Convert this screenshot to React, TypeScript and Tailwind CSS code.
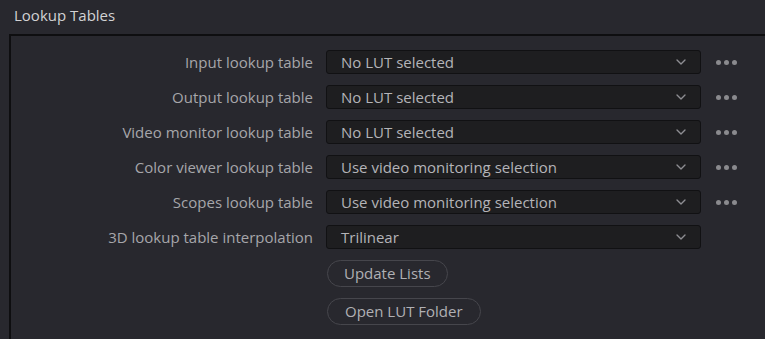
import { ChevronDown } from 'lucide-react';

const rows = [
  { label: 'Input lookup table', value: 'No LUT selected', more: true },
  { label: 'Output lookup table', value: 'No LUT selected', more: true },
  { label: 'Video monitor lookup table', value: 'No LUT selected', more: true },
  { label: 'Color viewer lookup table', value: 'Use video monitoring selection', more: true },
  { label: 'Scopes lookup table', value: 'Use video monitoring selection', more: true },
  { label: '3D lookup table interpolation', value: 'Trilinear', more: false },
];

function Dots() {
  return (
    <div className="flex items-center gap-[3px] w-[22px] ml-[15px]">
      <span className="w-[5px] h-[5px] rounded-full bg-[#8a8a8e]" />
      <span className="w-[5px] h-[5px] rounded-full bg-[#8a8a8e]" />
      <span className="w-[5px] h-[5px] rounded-full bg-[#8a8a8e]" />
    </div>
  );
}

export default function App() {
  return (
    <div
      className="w-[765px] h-[339px] overflow-hidden bg-[#28282e] text-[15px]"
      style={{ fontFamily: '"Open Sans", "Noto Sans", sans-serif' }}
    >
      <div className="h-[34px] pl-[14px] pt-[4px] text-[#d2d2d4]">Lookup Tables</div>
      <div className="ml-[9px] h-[305px] border-l-2 border-t-2 border-[#0e0e10] bg-[#28282e] pt-[14px]">
        <div className="flex flex-col gap-[11px]">
          {rows.map((r) => (
            <div key={r.label} className="flex items-center h-[24px]">
              <div className="w-[302px] text-right whitespace-nowrap text-[#a6a6aa]">{r.label}</div>
              <div className="ml-[13px] w-[375px] h-[24px] flex items-center justify-between rounded-[3px] border border-[#111113] bg-[#1e1e20] pl-[14px] pr-[11px] text-[#b4b4b8]">
                <span>{r.value}</span>
                <ChevronDown size={16} strokeWidth={2} className="text-[#8e8e92]" />
              </div>
              {r.more && <Dots />}
            </div>
          ))}
        </div>
        <div className="ml-[316px] mt-[11px] flex flex-col items-start gap-[11px]">
          <button className="h-[27px] px-[16px] rounded-full border border-[#46464c] text-[#b0b0b4]">
            Update Lists
          </button>
          <button className="h-[27px] px-[17px] rounded-full border border-[#46464c] text-[#b0b0b4]">
            Open LUT Folder
          </button>
        </div>
      </div>
    </div>
  );
}
